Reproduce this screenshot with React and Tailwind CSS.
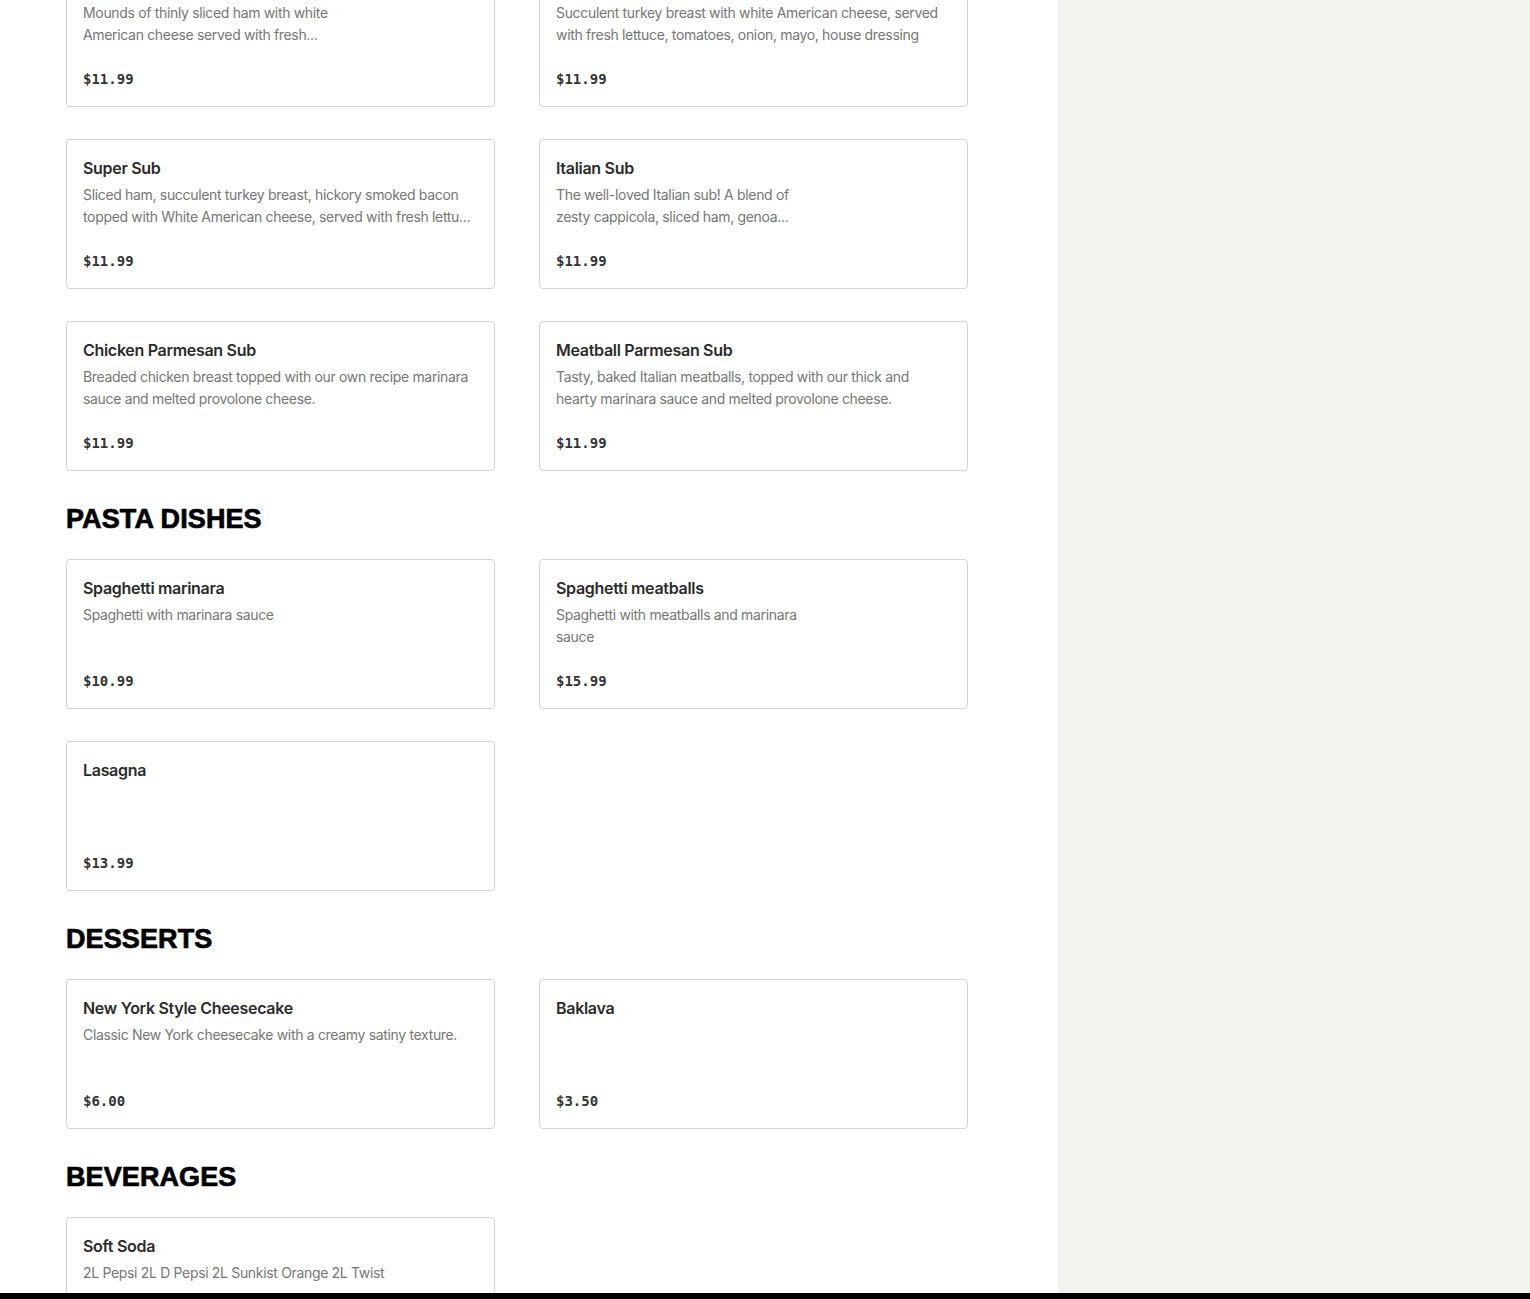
import React from "react";

const sections = [
  {
    title: null,
    items: [
      { name: "Ham & Cheese Sub", desc: ["Mounds of thinly sliced ham with white", "American cheese served with fresh..."], price: "$11.99" },
      { name: "Turkey Sub", desc: ["Succulent turkey breast with white American cheese, served", "with fresh lettuce, tomatoes, onion, mayo, house dressing"], price: "$11.99" },
      { name: "Super Sub", desc: ["Sliced ham, succulent turkey breast, hickory smoked bacon", "topped with White American cheese, served with fresh lettu..."], price: "$11.99" },
      { name: "Italian Sub", desc: ["The well-loved Italian sub! A blend of", "zesty cappicola, sliced ham, genoa..."], price: "$11.99" },
      { name: "Chicken Parmesan Sub", desc: ["Breaded chicken breast topped with our own recipe marinara", "sauce and melted provolone cheese."], price: "$11.99" },
      { name: "Meatball Parmesan Sub", desc: ["Tasty, baked Italian meatballs, topped with our thick and", "hearty marinara sauce and melted provolone cheese."], price: "$11.99" },
    ],
  },
  {
    title: "PASTA DISHES",
    items: [
      { name: "Spaghetti marinara", desc: ["Spaghetti with marinara sauce"], price: "$10.99" },
      { name: "Spaghetti meatballs", desc: ["Spaghetti with meatballs and marinara", "sauce"], price: "$15.99" },
      { name: "Lasagna", desc: [], price: "$13.99" },
    ],
  },
  {
    title: "DESSERTS",
    items: [
      { name: "New York Style Cheesecake", desc: ["Classic New York cheesecake with a creamy satiny texture."], price: "$6.00" },
      { name: "Baklava", desc: [], price: "$3.50" },
    ],
  },
  {
    title: "BEVERAGES",
    items: [
      { name: "Soft Soda", desc: ["2L Pepsi 2L D Pepsi 2L Sunkist Orange 2L Twist"], price: "$3.99" },
    ],
  },
];

function Card({ item }) {
  return (
    <div className="h-[150px] rounded-[4px] border border-[#d4d4d4] bg-white px-4 pt-4">
      <div className="text-[16px] leading-6 font-semibold text-[#2b2b2b] [font-family:Inter,'Liberation_Sans',sans-serif] tracking-[-0.3px]">
        {item.name}
      </div>
      <div className="mt-1 h-[44px] text-[14px] leading-[22px] text-[#767676] [font-family:Inter,'Liberation_Sans',sans-serif] tracking-[-0.33px]">
        {item.desc.map((l, i) => (
          <div key={i} className="whitespace-nowrap">{l}</div>
        ))}
      </div>
      <div className="mt-[23px] text-[14px] leading-5 font-bold text-[#333333] [font-family:'DejaVu_Sans_Mono',monospace]">
        {item.price}
      </div>
    </div>
  );
}

export default function App() {
  return (
    <div className="flex h-[1299px] w-full flex-col overflow-hidden">
      <div className="flex flex-1 overflow-hidden">
        <div className="w-[1058px] shrink-0 overflow-hidden bg-white pl-[66px]">
          <div className="-mt-[43px] w-[902px]">
            {sections.map((s, si) => (
              <div key={si}>
                {s.title && (
                  <h2 className="mt-8 mb-6 text-[27px] leading-8 font-black text-black [font-family:'Liberation_Sans',Arial,sans-serif] tracking-[0.1px] [-webkit-text-stroke:0.7px_black]">
                    {s.title}
                  </h2>
                )}
                <div className="grid grid-cols-[429px_429px] gap-x-[44px] gap-y-8">
                  {s.items.map((it, i) => (
                    <Card key={i} item={it} />
                  ))}
                </div>
              </div>
            ))}
          </div>
        </div>
        <div className="flex-1 bg-[#f3f2ee]" />
      </div>
      <div className="h-[6px] w-full shrink-0 bg-black" />
    </div>
  );
}
